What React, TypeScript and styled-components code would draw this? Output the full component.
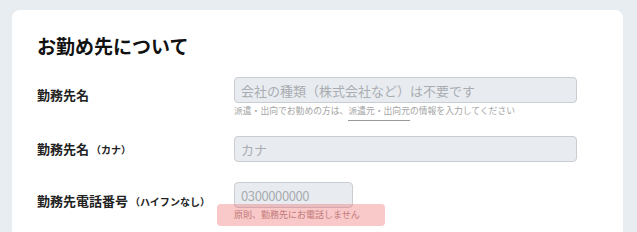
import React from 'react';
import styled, {createGlobalStyle} from 'styled-components';

const GlobalStyle = createGlobalStyle`
    html, body {
        margin: 0;
        padding: 0;
        background: #e8edf1;
        font-family: 'Noto Sans CJK JP', 'Noto Sans', sans-serif;
    }
`;

const Page = styled.div`
    padding: 10px 14px 0 12px;
    height: 232px;
    box-sizing: border-box;
    overflow: hidden;
`;

const Card = styled.section`
    background: #fff;
    border-radius: 8px;
    padding: 24px 25px 40px;
    min-height: 260px;
    box-sizing: border-box;
`;

const Title = styled.h2`
    margin: 0 0 19px;
    font-size: 19px;
    line-height: 24px;
    font-weight: 700;
    color: #111;
`;

const Form = styled.div`
    display: flex;
    flex-direction: column;
    gap: 19px;
`;

const Row = styled.div`
    display: grid;
    grid-template-columns: 197px 1fr;
    align-items: start;
`;

const Label = styled.label<{$drop?: number}>`
    font-size: 13px;
    font-weight: 700;
    color: #222;
    line-height: 26px;
    padding-top: ${(props) => props.$drop || 0}px;
`;

const Note = styled.span`
    font-size: 10px;
    margin-left: 2px;
`;

const Field = styled.div`
    position: relative;
    display: flex;
    flex-direction: column;
`;

const Input = styled.input<{$width?: number; $tight?: boolean}>`
    box-sizing: border-box;
    width: ${(props) => (props.$width ? `${props.$width}px` : '343px')};
    height: 26px;
    padding: 0 6px;
    border: 1px solid #c9ccd0;
    border-radius: 4px;
    background: #e8ecf0;
    font-family: inherit;
    font-size: 13px;
    letter-spacing: ${(props) => (props.$tight ? '-0.4px' : '0')};
    color: #333;
    outline: none;

    &::placeholder {
        color: #a9adb2;
    }
`;

const Help = styled.p`
    margin: 2px 0 0;
    font-size: 8.8px;
    line-height: 12px;
    color: #a3a3a3;
    white-space: nowrap;
`;

const Underlined = styled.span`
    border-bottom: 1px solid #999;
    padding-bottom: 3px;
`;

const Tooltip = styled.div`
    position: absolute;
    top: 22px;
    left: -17px;
    width: 168px;
    height: 22px;
    box-sizing: border-box;
    padding-left: 17px;
    border-radius: 4px;
    background: rgba(240, 110, 110, 0.38);
    color: #c27a7a;
    font-size: 9px;
    line-height: 22px;
    white-space: nowrap;
`;

export default function App() {
    return (
        <>
            <GlobalStyle />
            <Page>
                <Card>
                    <Title>お勤め先について</Title>
                    <Form>
                        <Row>
                            <Label $drop={5}>勤務先名</Label>
                            <Field>
                                <Input placeholder="会社の種類（株式会社など）は不要です" />
                                <Help>
                                    派遣・出向でお勤めの方は、<Underlined>派遣元・出向元</Underlined>の情報を入力してください
                                </Help>
                            </Field>
                        </Row>
                        <Row>
                            <Label>
                                勤務先名<Note>（カナ）</Note>
                            </Label>
                            <Field>
                                <Input placeholder="カナ" />
                            </Field>
                        </Row>
                        <Row>
                            <Label $drop={6}>
                                勤務先電話番号<Note>（ハイフンなし）</Note>
                            </Label>
                            <Field>
                                <Input $width={119} $tight placeholder="0300000000" />
                                <Tooltip>原則、勤務先にお電話しません</Tooltip>
                            </Field>
                        </Row>
                    </Form>
                </Card>
            </Page>
        </>
    );
}
